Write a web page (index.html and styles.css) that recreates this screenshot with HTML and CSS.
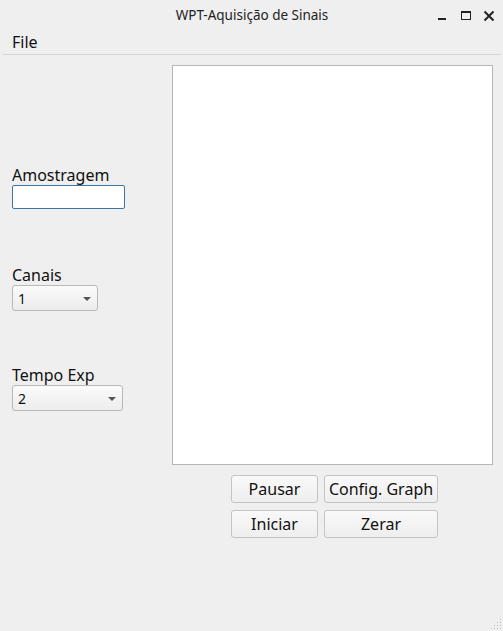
FILE: index.html
```html
<!DOCTYPE html>
<html>
<head>
<meta charset="utf-8">
<link rel="stylesheet" href="styles.css">
</head>
<body>
<div class="window">
  <div class="titlebar">
    <div class="title">WPT-Aquisição de Sinais</div>
    <div class="controls">
      <svg class="ctl" width="12" height="12" viewBox="0 0 12 12"><rect x="1" y="8" width="8" height="2" fill="#222"/></svg>
      <svg class="ctl" width="12" height="12" viewBox="0 0 12 12"><rect x="1.5" y="1.5" width="9" height="8" fill="none" stroke="#222" stroke-width="1"/><rect x="1" y="1" width="10" height="2" fill="#222"/></svg>
      <svg class="ctl" width="12" height="12" viewBox="0 0 12 12"><path d="M1.5 1.5 L10.5 10.5 M10.5 1.5 L1.5 10.5" stroke="#222" stroke-width="2"/></svg>
    </div>
  </div>
  <div class="menubar"><span class="menu-item">File</span></div>
  <div class="main">
    <div class="sidebar">
      <div class="group">
        <div class="label">Amostragem</div>
        <div class="lineedit"></div>
      </div>
      <div class="group">
        <div class="label">Canais</div>
        <div class="combo combo-short"><span>1</span><span class="arrow"></span></div>
      </div>
      <div class="group">
        <div class="label">Tempo Exp</div>
        <div class="combo combo-long"><span>2</span><span class="arrow"></span></div>
      </div>
    </div>
    <div class="content">
      <div class="graph"></div>
      <div class="buttons">
        <button class="btn">Pausar</button>
        <button class="btn">Config. Graph</button>
        <button class="btn">Iniciar</button>
        <button class="btn">Zerar</button>
      </div>
    </div>
  </div>
  <svg class="grip" width="12" height="12" viewBox="0 0 12 12">
    <g fill="#bdbdbd">
      <rect x="10" y="1" width="1" height="1"/>
      <rect x="7" y="4" width="1" height="1"/><rect x="10" y="4" width="1" height="1"/>
      <rect x="4" y="7" width="1" height="1"/><rect x="7" y="7" width="1" height="1"/><rect x="10" y="7" width="1" height="1"/>
      <rect x="1" y="10" width="1" height="1"/><rect x="4" y="10" width="1" height="1"/><rect x="7" y="10" width="1" height="1"/><rect x="10" y="10" width="1" height="1"/>
    </g>
  </svg>
</div>
</body>
</html>
```
FILE: styles.css
```css
html, body {
  margin: 0;
  padding: 0;
  background: #efefef;
}
body {
  font-family: "Noto Sans", "DejaVu Sans", sans-serif;
  color: #1a1a1a;
}
.window {
  position: relative;
  width: 503px;
  height: 631px;
  background: #efefef;
  overflow: hidden;
}
.titlebar {
  position: relative;
  height: 30px;
  display: flex;
  align-items: center;
  justify-content: center;
}
.title {
  font-size: 13.5px;
  color: #222;
  line-height: 30px;
  margin-left: 1px;
}
.controls {
  position: absolute;
  right: 8px;
  top: 10px;
  display: flex;
  gap: 11px;
}
.ctl { display: block; }
.menubar {
  height: 24px;
  margin: 0 2px;
  border-bottom: 1px solid #d6d6d6;
  display: flex;
  align-items: center;
  padding-left: 10px;
}
.menu-item {
  font-size: 16px;
  line-height: 20px;
  color: #111;
}
.main {
  display: flex;
}
.sidebar {
  width: 172px;
  padding-left: 12px;
  padding-top: 110px;
  box-sizing: border-box;
}
.group {
  height: 100px;
  display: flex;
  flex-direction: column;
}
.label {
  font-size: 16px;
  line-height: 20px;
  color: #111;
}
.lineedit {
  width: 111px;
  height: 22px;
  background: #fff;
  border: 1px solid #3a77a8;
  border-radius: 2px;
}
.combo {
  height: 26px;
  box-sizing: border-box;
  border: 1px solid #b8b8b8;
  border-radius: 3px;
  background: linear-gradient(#fbfbfb, #ececec);
  display: flex;
  align-items: center;
  justify-content: space-between;
  padding: 0 6px 0 5px;
  font-size: 14px;
  color: #111;
}
.combo-short { width: 86px; }
.combo-long { width: 111px; }
.arrow {
  width: 0;
  height: 0;
  border-left: 4px solid transparent;
  border-right: 4px solid transparent;
  border-top: 4px solid #555;
  margin-top: 1px;
}
.content {
  padding-top: 10px;
  display: flex;
  flex-direction: column;
}
.graph {
  width: 319px;
  height: 398px;
  background: #fff;
  border: 1px solid #b6b6b6;
}
.buttons {
  margin-top: 10px;
  margin-left: 59px;
  display: grid;
  grid-template-columns: 87px 114px;
  grid-auto-rows: 28px;
  column-gap: 6px;
  row-gap: 7px;
}
.btn {
  font-family: "Noto Sans", "DejaVu Sans", sans-serif;
  font-size: 16px;
  color: #111;
  background: linear-gradient(#f9f9f9, #eeeeee);
  border: 1px solid #c4c4c4;
  border-radius: 3px;
  padding: 0;
  margin: 0;
}
.grip {
  position: absolute;
  right: 1px;
  bottom: 1px;
}
```
